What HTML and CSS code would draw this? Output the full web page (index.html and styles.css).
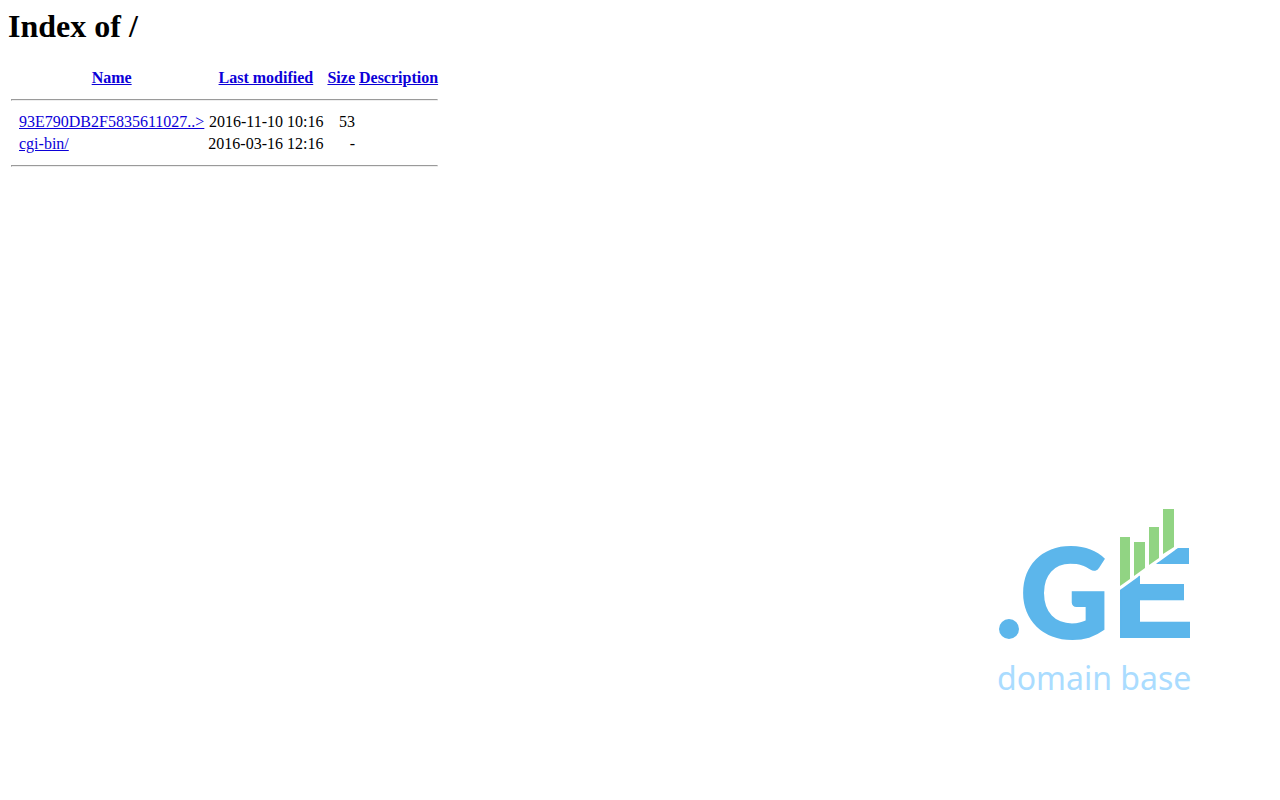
FILE: index.html
```html
<!DOCTYPE html>
<html lang="en">
<head>
    <meta charset="UTF-8">
    <meta name="viewport" content="width=device-width, initial-scale=1.0">
    <title>Index of /</title>
    <link rel="stylesheet" href="styles.css">
</head>
<body>
    <h1>Index of /</h1>
    <table class="listing">
        <tr>
            <th>&nbsp;</th>
            <th><a href="?C=N;O=D">Name</a></th>
            <th><a href="?C=M;O=A">Last modified</a></th>
            <th><a href="?C=S;O=A">Size</a></th>
            <th><a href="?C=D;O=A">Description</a></th>
        </tr>
        <tr><th colspan="5"><hr></th></tr>
        <tr>
            <td>&nbsp;</td>
            <td><a href="93E790DB2F5835611027.txt">93E790DB2F5835611027..&gt;</a></td>
            <td class="num">2016-11-10 10:16</td>
            <td class="num">53</td>
            <td></td>
        </tr>
        <tr>
            <td>&nbsp;</td>
            <td><a href="cgi-bin/">cgi-bin/</a></td>
            <td class="num">2016-03-16 12:16</td>
            <td class="num">-</td>
            <td></td>
        </tr>
        <tr><th colspan="5"><hr></th></tr>
    </table>

    <svg class="logo" width="200" height="200" viewBox="0 0 200 200">
        <defs>
            <!-- keeps the part of the E under the chart line -->
            <clipPath id="slope">
                <path d="M126 84 L184 42 H195 V78 H190 V98 H196 V133 H126 Z"/>
            </clipPath>
        </defs>
        <circle class="blue" cx="15" cy="123" r="10"/>
        <text class="blue letter-g" x="26" y="132">G</text>
        <g clip-path="url(#slope)">
            <text class="blue letter-e" x="118" y="131">E</text>
        </g>
        <g class="green">
            <path d="M126 31 H136 V73 L126 80 Z"/>
            <path d="M140 36 H151 V62 L140 70 Z"/>
            <path d="M155 21 H165 V52 L155 59 Z"/>
            <path d="M169 3 H180 V41 L169 48 Z"/>
        </g>
        <text class="tagline" x="3" y="184">domain base</text>
    </svg>
</body>
</html>
```
FILE: styles.css
```css
body {
    display: flex;
    flex-direction: column;
    box-sizing: border-box;
    min-height: 100vh;
    margin: 0;
    padding: 8px;
    background-color: #fff;
    font-family: "Liberation Serif", serif;
    font-size: 16px;
}
h1 {
    margin: 0 0 21px;
    font-size: 32px;
}
.listing {
    align-self: flex-start;
}
.num {
    text-align: right;
}
a {
    color: #0c00d8;
}
hr {
    margin: 8px 0;
}

.logo {
    align-self: flex-end;
    margin: auto 78px 86px 0;
    overflow: visible;
}
.blue {
    fill: #5cb6eb;
}
.green {
    fill: #91d483;
}
.letter-g,
.letter-e {
    stroke: #5cb6eb;
    stroke-width: 2px;
}
.letter-g {
    font-family: Lato, sans-serif;
    font-size: 123px;
    font-weight: 900;
}
.letter-e {
    font-family: "Liberation Sans", sans-serif;
    font-size: 128px;
    font-weight: bold;
}
.tagline {
    fill: #aadcff;
    font-family: "Noto Sans", sans-serif;
    font-size: 32px;
}
```
